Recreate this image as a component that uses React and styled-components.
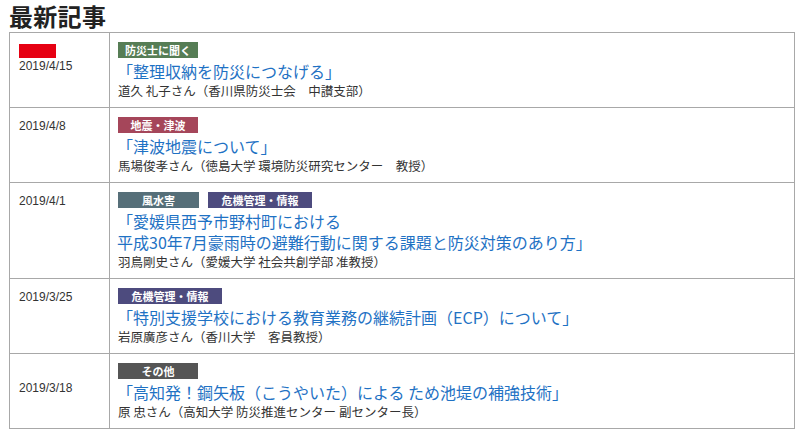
import React from "react";
import styled, { createGlobalStyle } from "styled-components";

const articles = [
  {
    date: "2019/4/15",
    isNew: true,
    tags: [{ label: "防災士に聞く", color: "#567d55", width: 80 }],
    title: ["「整理収納を防災につなげる」"],
    author: "道久 礼子さん（香川県防災士会　中讃支部）",
  },
  {
    date: "2019/4/8",
    tags: [{ label: "地震・津波", color: "#a5465a", width: 80 }],
    title: ["「津波地震について」"],
    author: "馬場俊孝さん（徳島大学 環境防災研究センター　教授）",
  },
  {
    date: "2019/4/1",
    tags: [
      { label: "風水害", color: "#566f79", width: 81 },
      { label: "危機管理・情報", color: "#4d4b7e", width: 104 },
    ],
    title: [
      "「愛媛県西予市野村町における",
      "平成30年7月豪雨時の避難行動に関する課題と防災対策のあり方」",
    ],
    author: "羽鳥剛史さん（愛媛大学 社会共創学部 准教授）",
  },
  {
    date: "2019/3/25",
    tags: [{ label: "危機管理・情報", color: "#4d4b7e", width: 104 }],
    title: ["「特別支援学校における教育業務の継続計画（ECP）について」"],
    author: "岩原廣彦さん（香川大学　客員教授）",
  },
  {
    date: "2019/3/18",
    middle: true,
    tags: [{ label: "その他", color: "#555555", width: 80 }],
    title: ["「高知発！鋼矢板（こうやいた）による ため池堤の補強技術」"],
    author: "原 忠さん（高知大学 防災推進センター 副センター長）",
  },
];

const App = () => {
  return (
    <>
      <GlobalStyle />
      <Page>
        <Heading>最新記事</Heading>
        <Table>
          <tbody>
            {articles.map((a) => (
              <tr key={a.date}>
                <DateCell $middle={a.middle}>
                  {a.isNew && <NewMark />}
                  <DateText>{a.date}</DateText>
                </DateCell>
                <BodyCell>
                  <TagRow>
                    {a.tags.map((t) => (
                      <Tag key={t.label} $color={t.color} $width={t.width}>
                        {t.label}
                      </Tag>
                    ))}
                  </TagRow>
                  <Title href="#">
                    {a.title.map((line, i) => (
                      <TitleLine key={i}>{line}</TitleLine>
                    ))}
                  </Title>
                  <Author>{a.author}</Author>
                </BodyCell>
              </tr>
            ))}
          </tbody>
        </Table>
      </Page>
    </>
  );
};

export default App;

// Styled Components

const GlobalStyle = createGlobalStyle`
  html, body {
    margin: 0;
    padding: 0;
    background: #fff;
  }
  body {
    font-family: "Liberation Sans", "Noto Sans CJK JP", sans-serif;
    color: #333;
  }
`;

const Page = styled.div`
  width: 800px;
  padding: 0 6px 0 9px;
  box-sizing: border-box;
`;

const Heading = styled.h2`
  margin: 0;
  height: 32px;
  font-family: "Noto Sans CJK JP", sans-serif;
  font-size: 24px;
  line-height: 32px;
  font-weight: 700;
  color: #222;
  letter-spacing: 0.3px;
`;

const Table = styled.table`
  width: 786px;
  border-collapse: collapse;
  border: 1px solid #9c9c9c;

  td {
    border: 1px solid #a8a8a8;
  }
`;

const DateCell = styled.td`
  width: 100px;
  box-sizing: border-box;
  padding: ${(p) => (p.$middle ? "26px 0 0 9px" : "10px 0 0 9px")};
  vertical-align: top;
`;

const NewMark = styled.div`
  width: 37px;
  height: 14px;
  margin-top: 1px;
  background: #e60012;
`;

const DateText = styled.div`
  font-size: 12px;
  line-height: 16px;
  color: #333;
`;

const BodyCell = styled.td`
  padding: 9px 8px 8px 8px;
  vertical-align: top;
`;

const TagRow = styled.div`
  display: flex;
  gap: 9px;
  margin-bottom: 3px;
`;

const Tag = styled.span`
  display: inline-block;
  width: ${(p) => p.$width}px;
  height: 16px;
  line-height: 16px;
  background: ${(p) => p.$color};
  color: #fff;
  font-family: "Noto Sans CJK JP", sans-serif;
  font-size: 11px;
  font-weight: 700;
  text-align: center;
`;

const Title = styled.a`
  display: block;
  color: #1f72c4;
  text-decoration: none;
  margin-left: -1px;
`;

const TitleLine = styled.span`
  display: block;
  height: 21px;
  font-family: "Noto Sans CJK JP", sans-serif;
  font-size: 16px;
  line-height: 21px;
  white-space: nowrap;
`;

const Author = styled.div`
  height: 17px;
  font-family: "Noto Sans CJK JP", sans-serif;
  font-size: 12.5px;
  line-height: 17px;
  color: #333;
`;
